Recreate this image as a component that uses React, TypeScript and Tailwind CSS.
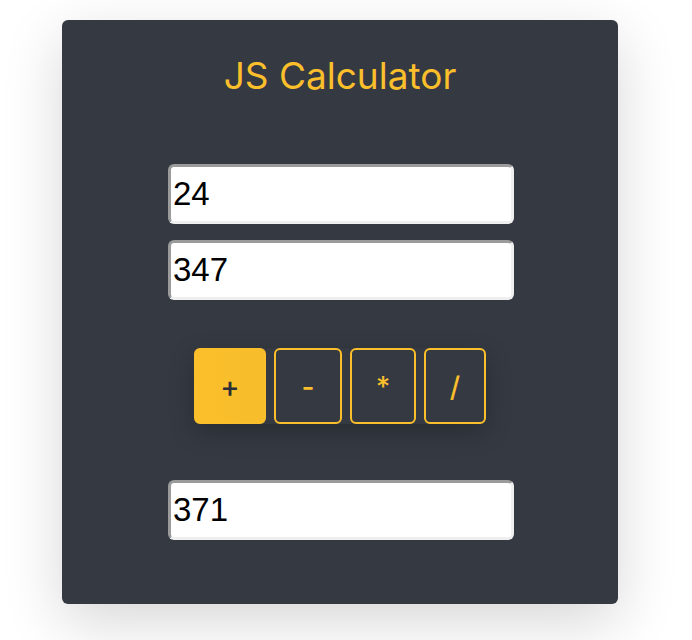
import { useState } from 'react';

const ops = [
  { sym: '+', w: 'w-[72px]' },
  { sym: '-', w: 'w-[68px]' },
  { sym: '*', w: 'w-[66px]' },
  { sym: '/', w: 'w-[62px]' },
];

function NumberField({ value }: { value: string }) {
  return (
    <input
      readOnly
      value={value}
      className="h-[60px] w-[346px] rounded-md border-[3px] border-solid border-t-[#9b9b9b] border-l-[#9b9b9b] border-b-[#efefef] border-r-[#efefef] bg-white px-[2px] font-['Liberation_Sans',Arial,sans-serif] text-[33px] text-black outline-none"
    />
  );
}

export default function App() {
  const [active] = useState('+');

  return (
    <div className="min-h-screen bg-white">
      <div className="ml-[62px] pt-[20px]">
        <div className="flex h-[584px] w-[556px] flex-col items-center rounded-md bg-[#353a42] pt-[36px] shadow-[0_18px_60px_rgba(0,0,0,0.16)]">
          <h1 className="font-['Inter',sans-serif] text-[37px] leading-[40px] text-[#fbbf2c]">JS Calculator</h1>

          <div className="mt-[68px] ml-[2px] flex flex-col gap-4">
            <NumberField value="24" />
            <NumberField value="347" />
          </div>

          <div className="mt-[48px] flex gap-2 rounded-md shadow-[0_8px_24px_rgba(0,0,0,0.25)]">
            {ops.map((op) => (
              <button
                key={op.sym}
                className={
                  op.sym === active
                    ? `h-[76px] ${op.w} rounded-md border-2 border-[#fbbf2c] bg-gradient-to-r from-[#fbbf2c] to-[#f8bd2a] pt-[2px] font-['Inter',sans-serif] text-[29px] font-medium text-[#2a2e35]`
                    : `h-[76px] ${op.w} rounded-md border-2 border-[#fbbf2c] bg-[#353a42] pt-[2px] font-['Inter',sans-serif] text-[28px] font-medium text-[#fbbf2c]`
                }
              >
                {op.sym}
              </button>
            ))}
          </div>

          <div className="mt-[56px] ml-[2px]">
            <NumberField value="371" />
          </div>
        </div>
      </div>
    </div>
  );
}
